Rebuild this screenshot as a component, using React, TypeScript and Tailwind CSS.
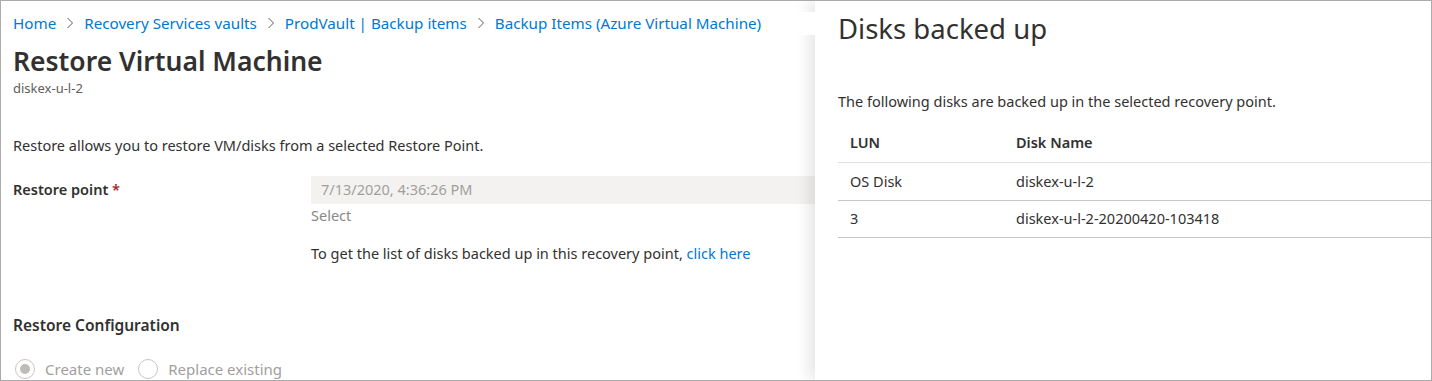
import React from 'react';

const font = { fontFamily: '"Segoe UI", "Noto Sans", "Open Sans", sans-serif' };

function Chevron() {
  return (
    <svg width="8" height="12" viewBox="0 0 8 12" className="mx-[10px] shrink-0">
      <path d="M1.5 1 L6.5 6 L1.5 11" fill="none" stroke="#605e5c" strokeWidth="1" />
    </svg>
  );
}

function Radio({ checked, label }: { checked?: boolean; label: string }) {
  return (
    <div className="flex items-center gap-[10px]">
      <div className="w-[20px] h-[20px] rounded-full border border-[#c8c6c4] flex items-center justify-center">
        {checked && <div className="w-[10px] h-[10px] rounded-full bg-[#bebbb8]" />}
      </div>
      <span className="text-[15px] text-[#a19f9d]">{label}</span>
    </div>
  );
}

const crumbs = ['Home', 'Recovery Services vaults', 'ProdVault | Backup items', 'Backup Items (Azure Virtual Machine)'];

const disks = [
  { lun: 'OS Disk', name: 'diskex-u-l-2' },
  { lun: '3', name: 'diskex-u-l-2-20200420-103418' },
];

export default function App() {
  return (
    <div
      className="w-[1432px] h-[381px] border border-[#ababab] bg-white flex overflow-hidden text-[#323130]"
      style={font}
    >
      {/* Left: restore blade */}
      <div className="w-[814px] shrink-0 flex flex-col">
        <div className="relative z-10 mt-[11px] h-[27px] bg-white flex items-center pl-[12px] text-[15.2px] text-[#0078d4]">
          {crumbs.map((c, i) => (
            <React.Fragment key={c}>
              {i > 0 && <Chevron />}
              <span className="whitespace-nowrap">{c}</span>
            </React.Fragment>
          ))}
        </div>
        <div className="pl-[12px]">
          <h1 className="mt-[10px] text-[26.5px] leading-[32px] font-semibold">Restore Virtual Machine</h1>
          <div className="mt-[2px] text-[13px] leading-[18px] text-[#605e5c]">diskex-u-l-2</div>
          <p className="mt-[38px] text-[14.5px] leading-[20px]">
            Restore allows you to restore VM/disks from a selected Restore Point.
          </p>
          <div className="mt-[21px] flex">
            <div className="w-[298px] shrink-0 pt-[3px] text-[14.5px] font-semibold">
              Restore point <span className="text-[#a4262c]">*</span>
            </div>
            <div className="flex-1">
              <div className="h-[28px] bg-[#f3f2f1] flex items-center pl-[10px] text-[14.5px] text-[#a19f9d]">
                7/13/2020, 4:36:26 PM
              </div>
              <div className="mt-[1px] text-[14.5px] leading-[20px] text-[#8a8886]">Select</div>
              <p className="mt-[18px] text-[14.5px] leading-[20px]">
                To get the list of disks backed up in this recovery point,{' '}
                <span className="text-[#0078d4]">click here</span>
              </p>
            </div>
          </div>
          <h2 className="mt-[52px] text-[15.5px] leading-[20px] font-semibold">Restore Configuration</h2>
          <div className="mt-[23px] flex items-center gap-[14px] pl-[2px]">
            <Radio checked label="Create new" />
            <Radio label="Replace existing" />
          </div>
        </div>
      </div>

      {/* Right: context pane */}
      <div className="flex-1 bg-white shadow-[-6px_0_14px_rgba(0,0,0,0.10)] pl-[23px]">
        <h2 className="mt-[11px] text-[27.5px] leading-[34px]">Disks backed up</h2>
        <p className="mt-[45px] text-[14.5px] leading-[20px]">
          The following disks are backed up in the selected recovery point.
        </p>
        <div className="mt-[12px] text-[14.5px]">
          <div className="flex h-[40px] items-center border-b border-[#e1dfdd] font-semibold">
            <div className="w-[178px] pl-[12px]">LUN</div>
            <div>Disk Name</div>
          </div>
          {disks.map((d, i) => (
            <div key={d.lun} className={`flex items-center border-b border-[#c8c6c4] ${i === 0 ? 'h-[38px]' : 'h-[37px]'}`}>
              <div className="w-[178px] pl-[12px]">{d.lun}</div>
              <div>{d.name}</div>
            </div>
          ))}
        </div>
      </div>
    </div>
  );
}
